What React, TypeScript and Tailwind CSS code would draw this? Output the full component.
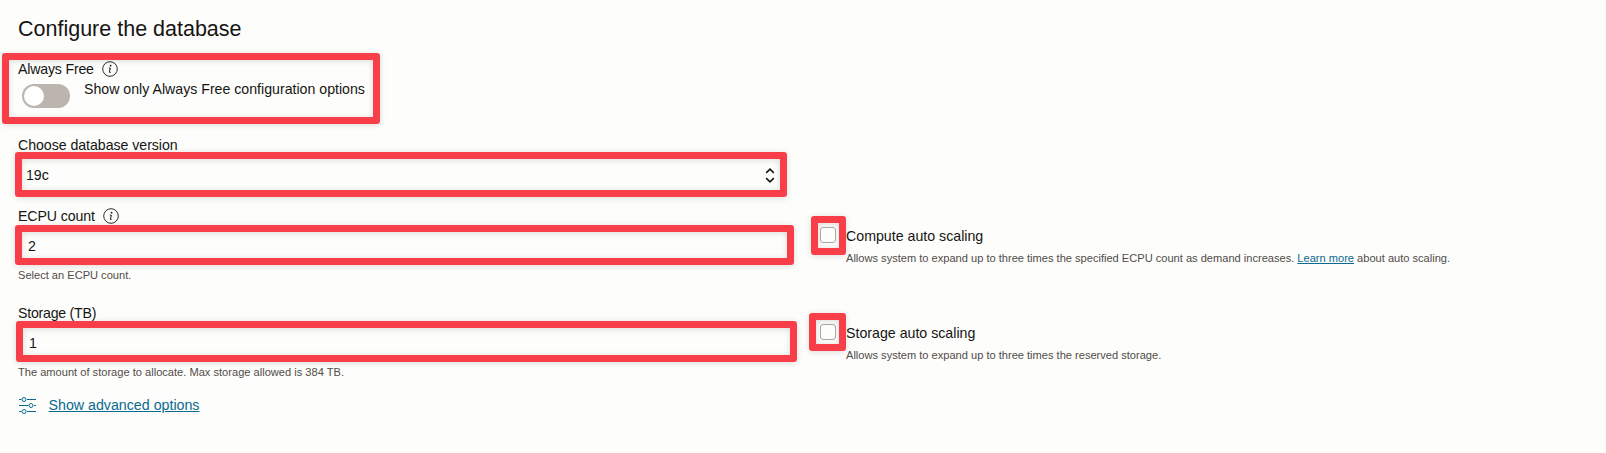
import React from "react";

const frame =
  "rounded-[3px] border-7 border-[#f73e49] shadow-[0_1px_6px_rgba(0,0,0,0.14),inset_0_1px_6px_rgba(0,0,0,0.14)]";

function Info() {
  return (
    <svg className="size-4 shrink-0" viewBox="0 0 16 16" fill="none">
      <circle cx="8" cy="8" r="7.3" stroke="#302d2a" strokeWidth="1" />
      <circle cx="8.6" cy="4.7" r="0.85" fill="#161513" />
      <path d="M6.8 7.1h1.5L7.4 11.4h1.2" stroke="#161513" strokeWidth="1" />
    </svg>
  );
}

function Option({ title, box, children }: { title: string; box: string; children: React.ReactNode }) {
  return (
    <div className="flex">
      <div className={box + " " + frame}>
        <div className="size-4 shrink-0 rounded-[3px] border border-[#aaa5a1] bg-[#fdfdfb]" />
      </div>
      <div className="pt-3">
        <div className="h-6 whitespace-nowrap text-[14.2px] leading-4">{title}</div>
        <div className="whitespace-nowrap text-[11.08px] leading-3 text-[#504c49]">{children}</div>
      </div>
    </div>
  );
}

export default function App() {
  return (
    <main className="flex h-[453px] w-[1606px] overflow-hidden bg-[#fdfdfb] font-['Liberation_Sans',Arial,sans-serif] text-[14.17px] leading-4 text-[#161513]">
      <section className="flex w-[809px] shrink-0 flex-col pt-[17px]">
        <h1 className="ml-[18px] h-9 text-[21.5px] leading-6">Configure the database</h1>
        <div className={"ml-[2px] h-[71px] w-[378px] " + frame}>
          <div className="flex h-5 items-start pt-px pl-[9px]">
            <span className="w-[84px] tracking-[-0.19px]">Always Free</span>
            <Info />
          </div>
          <div className="flex pl-[13px]">
            <div className="mt-1 h-6 w-12 rounded-full bg-[#bbb4af] p-[2px]">
              <div className="size-5 rounded-full bg-white" />
            </div>
            <span className="ml-[14px] pt-px whitespace-nowrap">Show only Always Free configuration options</span>
          </div>
        </div>
        <label className="mt-[13px] ml-[18px] h-[15px] tracking-[-0.04px]">Choose database version</label>
        <div className={"ml-[15px] flex h-[45px] w-[772px] justify-between pt-2 pr-[5px] pl-1 " + frame}>
          <span>19c</span>
          <svg className="mt-px h-[15px] w-[10px]" viewBox="0 0 10 15" fill="none" stroke="#161513" strokeWidth="1.6">
            <path d="M1.2 4.8 5 1.2l3.8 3.6M1.2 10.2 5 13.8l3.8-3.6" />
          </svg>
        </div>
        <div className="mt-[11px] ml-[18px] flex h-[17px]">
          <span className="w-[85px] tracking-[-0.1px]">ECPU count</span>
          <Info />
        </div>
        <div className={"ml-[15px] h-10 w-[779px] pt-[6px] pl-[6px] " + frame}>2</div>
        <p className="mt-1 ml-[18px] h-9 text-[11.08px] leading-3 text-[#504c49]">Select an ECPU count.</p>
        <label className="ml-[18px] h-4 tracking-[-0.24px]">Storage (TB)</label>
        <div className={"ml-[16px] h-[41px] w-[781px] pt-[7px] pl-[6px] " + frame}>1</div>
        <p className="mt-1 ml-[18px] h-[31px] text-[11.1px] leading-3 text-[#504c49]">
          The amount of storage to allocate. Max storage allowed is 384 TB.
        </p>
        <div className="ml-[19px] flex text-[#0b6a8f]">
          <svg className="h-[18px] w-[17px]" viewBox="0 0 17 18" fill="none" stroke="currentColor">
            <path d="M0 2.5h2.4M8 2.5h9M0 8.5h9.4M15 8.5h2M0 14.5h2.4M8 14.5h9" />
            <circle cx="5" cy="2.5" r="2" />
            <circle cx="12" cy="8.5" r="2" />
            <circle cx="5" cy="14.5" r="2" />
          </svg>
          <a className="ml-[12.5px] text-[14.22px] underline">Show advanced options</a>
        </div>
      </section>
      <section className="pt-[216px]">
        <div className="h-[97px]">
          <Option title="Compute auto scaling" box="ml-[2px] h-[39px] w-[35px] pt-1 pl-[2px]">
            Allows system to expand up to three times the specified ECPU count as demand increases.{" "}
            <a className="text-[#0b6a8f] underline">Learn more</a> about auto scaling.
          </Option>
        </div>
        <Option title="Storage auto scaling" box="h-[38px] w-[37px] pt-1 pl-1">
          Allows system to expand up to three times the reserved storage.
        </Option>
      </section>
    </main>
  );
}
